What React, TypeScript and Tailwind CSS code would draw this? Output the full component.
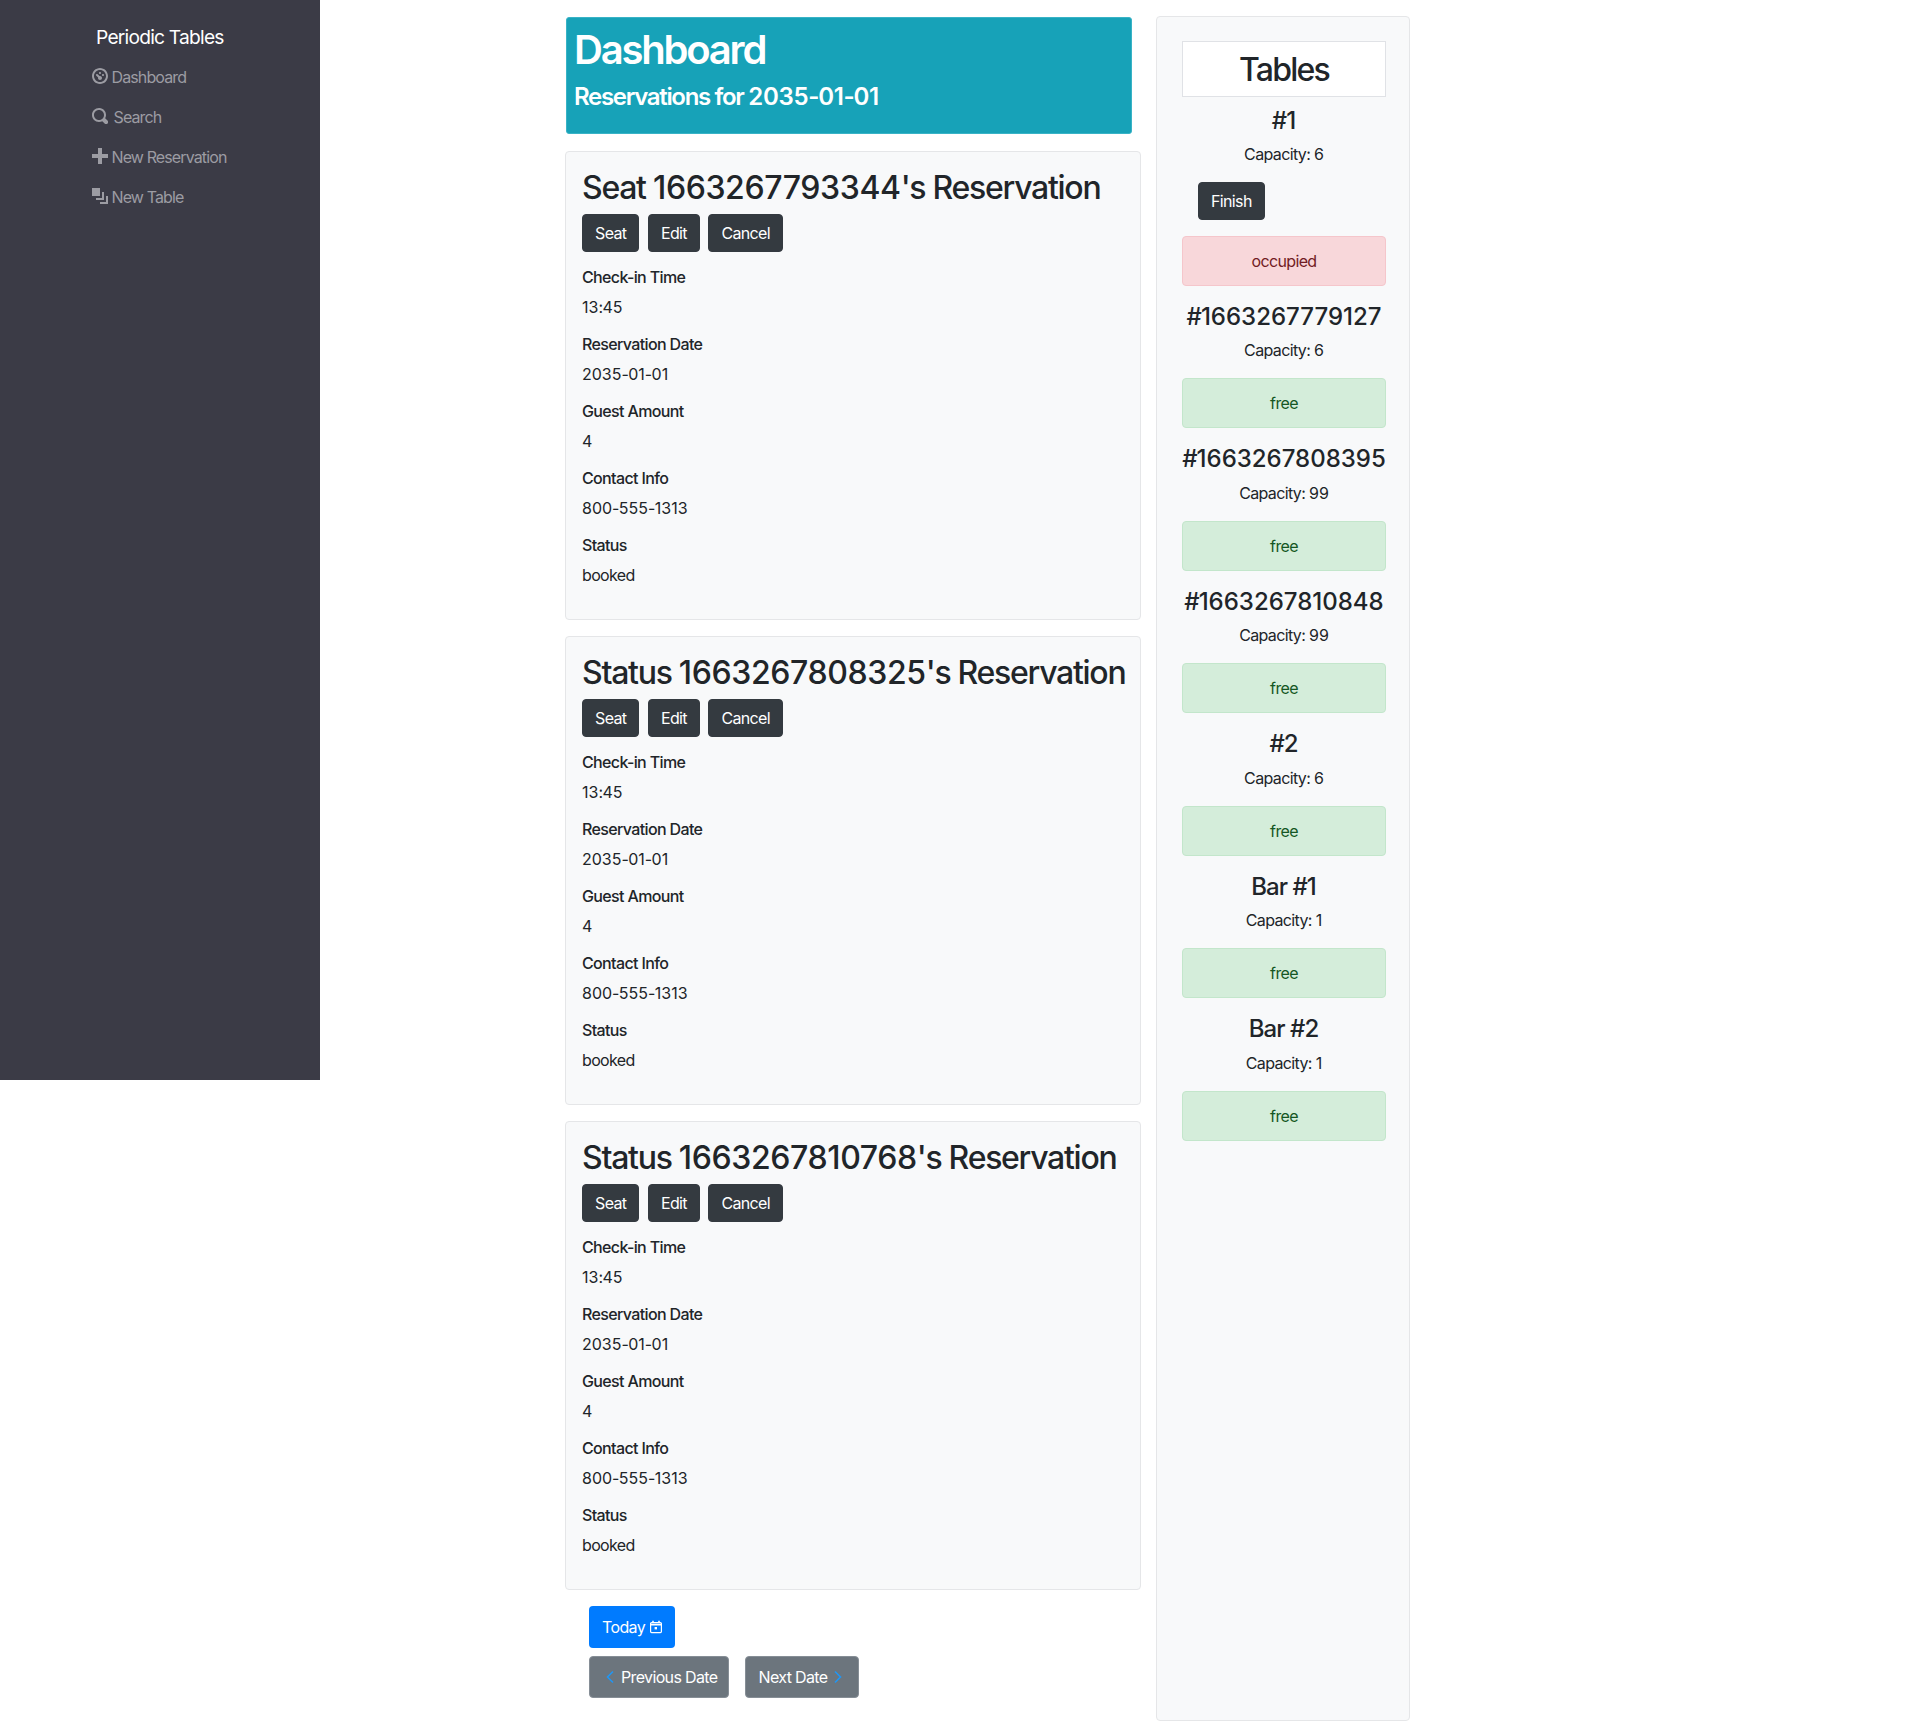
import { Fragment } from "react"

const oi = {
  dashboard:
    "M4 0c-2.2 0-4 1.8-4 4s1.8 4 4 4 4-1.8 4-4-1.8-4-4-4zm0 1c1.66 0 3 1.34 3 3s-1.34 3-3 3-3-1.34-3-3 1.34-3 3-3zm0 1c-.28 0-.5.22-.5.5s.22.5.5.5.5-.22.5-.5-.22-.5-.5-.5zm-1.66 1a.5.5 0 0 0-.19.84l.91.91c-.02.08-.06.16-.06.25 0 .55.45 1 1 1s1-.45 1-1-.45-1-1-1c-.09 0-.17.04-.25.06l-.91-.91a.5.5 0 0 0-.44-.16.5.5 0 0 0-.06 0zm3.16 0c-.28 0-.5.22-.5.5s.22.5.5.5.5-.22.5-.5-.22-.5-.5-.5z",
  search:
    "M3.5 0c-1.93 0-3.5 1.57-3.5 3.5s1.57 3.5 3.5 3.5c.59 0 1.17-.14 1.66-.41a1 1 0 0 0 .13.13l1 1a1.02 1.02 0 1 0 1.44-1.44l-1-1a1 1 0 0 0-.16-.13c.27-.49.44-1.06.44-1.66 0-1.93-1.57-3.5-3.5-3.5zm0 1c1.39 0 2.5 1.11 2.5 2.5 0 .66-.24 1.27-.66 1.72-.01.01-.02.02-.03.03a1 1 0 0 0-.13.13c-.44.4-1.04.63-1.69.63-1.39 0-2.5-1.11-2.5-2.5s1.11-2.5 2.5-2.5z",
  plus: "M3 0v3h-3v2h3v3h2v-3h3v-2h-3v-3h-2z",
  layers: "M0 0v4h4v-4h-4zm5 2v3h-3v1h4v-4h-1zm2 2v3h-3v1h4v-4h-1z",
}

// letters run tighter than digits in the reference, so they get separate tracking
function T({ children, tight, large }: { children: string; tight?: boolean; large?: boolean }) {
  return (
    <>
      {children.split(/(\d+)/).map((part, i) => (
        <Fragment key={i}>
          {part && (
            <span
              className={
                i % 2
                  ? large
                    ? "tracking-[-0.012em]"
                    : "tracking-normal"
                  : tight
                    ? "tracking-[-0.055em]"
                    : "tracking-[-0.04em]"
              }
            >
              {part}
            </span>
          )}
        </Fragment>
      ))}
    </>
  )
}

function NavItem({ icon, text, gap }: { icon: string; text: string; gap: string }) {
  return (
    <a className={`flex h-10 items-center text-base text-[#9c9ca3] ${gap}`}>
      <svg viewBox="0 0 8 8" className="h-4 w-4 -translate-y-px fill-[#9c9ca3]">
        <path d={icon} />
      </svg>
      <span><T tight>{text}</T></span>
    </a>
  )
}

function Sidebar() {
  return (
    <aside className="h-[1080px] w-[320px] shrink-0 bg-[#3b3b46] pl-[92px] pt-[18px]">
      <div className="flex h-[39px] items-center pl-[4px] text-[19.2px] text-white"><span><T>Periodic Tables</T></span></div>
      <nav className="flex flex-col">
        <NavItem icon={oi.dashboard} text="Dashboard" gap="gap-[3.5px]" />
        <NavItem icon={oi.search} text="Search" gap="gap-[5.5px]" />
        <NavItem icon={oi.plus} text="New Reservation" gap="gap-[3.5px]" />
        <NavItem icon={oi.layers} text="New Table" gap="gap-[3.5px]" />
      </nav>
    </aside>
  )
}

function DarkButton({ text }: { text: string }) {
  return (
    <button className="h-[38px] rounded-[4px] border border-[#343a40] bg-[#343a40] px-3 text-base text-white"><T>{text}</T></button>
  )
}

function Field({ label, value }: { label: string; value: string }) {
  return (
    <div className="mb-[7px]">
      <div className="h-[30px] text-base font-medium leading-[30px]"><T>{label}</T></div>
      <div className="h-[30px] text-base leading-[30px]"><T>{value}</T></div>
    </div>
  )
}

function ReservationCard({ name }: { name: string }) {
  return (
    <section className="mb-[16px] h-[469px] w-[576px] rounded-[4px] border border-[#e5e6e8] bg-[#f8f9fa] px-4 pt-[17px]">
      <h2 className="whitespace-nowrap text-[32px] font-medium leading-[38px]"><T large>{`${name}'s Reservation`}</T></h2>
      <div className="mt-[7px] flex gap-[8.5px]">
        <DarkButton text="Seat" />
        <DarkButton text="Edit" />
        <DarkButton text="Cancel" />
      </div>
      <div className="mt-[10px]">
        <Field label="Check-in Time" value="13:45" />
        <Field label="Reservation Date" value="2035-01-01" />
        <Field label="Guest Amount" value="4" />
        <Field label="Contact Info" value="800-555-1313" />
        <Field label="Status" value="booked" />
      </div>
    </section>
  )
}

function TableRow({ name, capacity, status, finish }: { name: string; capacity: string; status: string; finish?: boolean }) {
  const free = status === "free"
  return (
    <div>
      <h4 className="h-[38.5px] text-center text-[24px] font-medium leading-[40px]"><T>{name}</T></h4>
      <p className={finish ? "mt-[2px] h-[24px] text-center text-base leading-[24px]" : "mt-[3px] h-[24px] text-center text-base leading-[24px]"}>
        <T>{`Capacity: ${capacity}`}</T>
      </p>
      {finish && (
        <div className="ml-[16px] mt-[16px]">
          <DarkButton text="Finish" />
        </div>
      )}
      <div
        className={
          free
            ? "mb-[11px] mt-[16px] flex h-[50px] items-center justify-center rounded-[4px] border border-[#c3e6cb] bg-[#d4edda] text-base text-[#155724]"
            : "mb-[11px] mt-[16px] flex h-[50px] items-center justify-center rounded-[4px] border border-[#f5c6cb] bg-[#f8d7da] text-base text-[#721c24]"
        }
      >
        <span><T>{status}</T></span>
      </div>
    </div>
  )
}

function CalendarIcon() {
  return (
    <svg viewBox="0 0 14 14" className="h-[14px] w-[14px]" fill="none" stroke="white" strokeWidth="1.2">
      <rect x="1.6" y="2.6" width="10.8" height="10" rx="1" />
      <path d="M1.6 4.6h10.8M4 .8v2M10 .8v2" strokeWidth="1.6" />
      <rect x="5.6" y="7" width="2.4" height="2.4" fill="white" stroke="none" />
    </svg>
  )
}

function Chevron({ dir }: { dir: "left" | "right" }) {
  return (
    <svg viewBox="0 0 10 14" className="h-[14px] w-[10px]" fill="none" stroke="#2196f3" strokeWidth="1.6">
      <path d={dir === "left" ? "M8 1.5 2.5 7 8 12.5" : "M2 1.5 7.5 7 2 12.5"} />
    </svg>
  )
}

export default function App() {
  return (
    <div className="flex h-[1721px] bg-white text-[#212529] [font-family:Inter,sans-serif]">
      <Sidebar />
      <main className="ml-[245px] w-[576px] pt-[17px]">
        <header className="mb-[17px] ml-[1px] h-[117px] w-[566px] rounded-[3px] border border-[#39b3c6] bg-[#17a2b8] px-[7px] pt-[8px] text-white">
          <h1 className="text-[40px] font-semibold leading-[48px]"><T tight large>Dashboard</T></h1>
          <h4 className="mt-[8px] text-[24px] font-semibold leading-[29px]"><T tight large>Reservations for 2035-01-01</T></h4>
        </header>
        <ReservationCard name="Seat 1663267793344" />
        <ReservationCard name="Status 1663267808325" />
        <ReservationCard name="Status 1663267810768" />
        <div className="ml-[24px] mt-[1px] flex flex-col items-start gap-2">
          <button className="flex h-[42px] items-center gap-[4px] rounded-[4px] bg-[#007bff] pl-[13px] pr-[12px] text-base text-white">
            <span><T>Today</T></span> <CalendarIcon />
          </button>
          <div className="flex gap-[16px]">
            <button className="flex h-[42px] items-center gap-[6px] rounded-[4px] border border-[#868e96] bg-[#6c757d] pl-[15px] pr-[11px] text-base text-white">
              <Chevron dir="left" /> <span><T>Previous Date</T></span>
            </button>
            <button className="flex h-[42px] items-center gap-[6px] rounded-[4px] border border-[#868e96] bg-[#6c757d] pl-[12px] pr-[15px] text-base text-white">
              <span><T>Next Date</T></span> <Chevron dir="right" />
            </button>
          </div>
        </div>
      </main>
      <aside className="ml-[15px] mt-[16px] h-[1705px] w-[254px] rounded-[4px] border border-[#e5e6e8] bg-[#f8f9fa] pl-[25px] pr-[23px] pt-[24px]">
        <h2 className="mb-[4px] h-[56px] border border-[#e0e2e6] bg-white text-center text-[32px] font-medium leading-[56px]"><T tight>Tables</T></h2>
        <TableRow name="#1" capacity="6" status="occupied" finish />
        <TableRow name="#1663267779127" capacity="6" status="free" />
        <TableRow name="#1663267808395" capacity="99" status="free" />
        <TableRow name="#1663267810848" capacity="99" status="free" />
        <TableRow name="#2" capacity="6" status="free" />
        <TableRow name="Bar #1" capacity="1" status="free" />
        <TableRow name="Bar #2" capacity="1" status="free" />
      </aside>
    </div>
  )
}
